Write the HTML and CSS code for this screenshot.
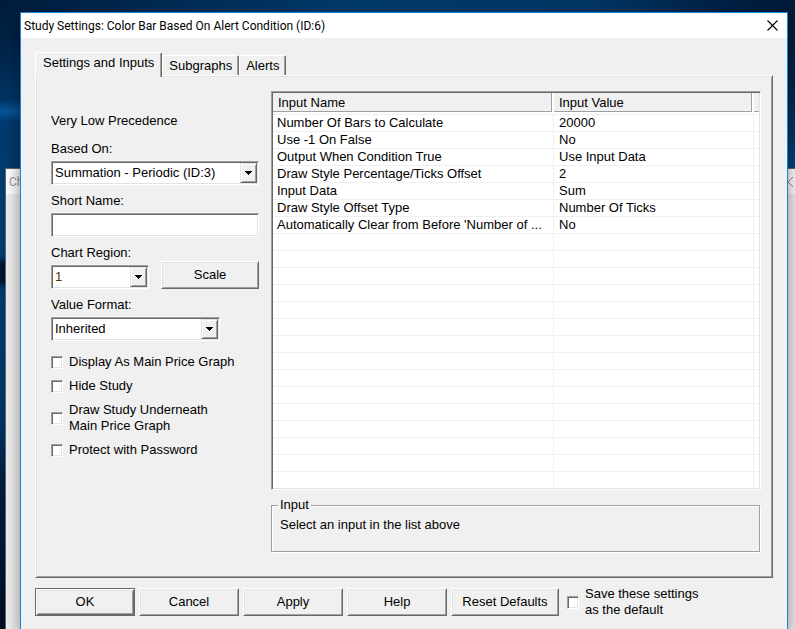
FILE: index.html
```
<!DOCTYPE html>
<html lang="en">
<head>
<meta charset="utf-8">
<title>Study Settings</title>
<link rel="stylesheet" href="styles.css">
</head>
<body>
<div class="parent-window">
  <div class="parent-title"><span>Ch</span>
    <svg class="parent-close" width="10" height="10" viewBox="0 0 10 10"><path d="M0 0L10 10M10 0L0 10" fill="none" stroke="#8c8c8c"/></svg>
  </div>
</div>
<main class="dialog">
  <header class="title-bar">
    <h1>Study Settings: Color Bar Based On Alert Condition (ID:6)</h1>
    <button class="close" type="button" aria-label="Close"><svg width="11" height="11" viewBox="0 0 11 11"><path d="M.5 .5L10.5 10.5M10.5 .5L.5 10.5" fill="none" stroke="#000" stroke-width="1.1"/></svg></button>
  </header>
  <form class="content">
    <div class="tabs" role="tablist">
      <button class="tab active" type="button" role="tab" aria-selected="true">Settings and Inputs</button>
      <button class="tab" type="button" role="tab">Subgraphs</button>
      <button class="tab" type="button" role="tab">Alerts</button>
    </div>
    <div class="panel">
      <div class="options">
        <p class="precedence">Very Low Precedence</p>
        <div class="field">
          <label for="based">Based On:</label>
          <div class="combo"><select id="based"><option>Summation - Periodic (ID:3)</option></select><span class="drop"><svg width="7" height="4" viewBox="0 0 7 4"><path d="M0 0H7V1H6V2H5V3H4V4H3V3H2V2H1V1H0Z"/></svg></span></div>
        </div>
        <div class="field">
          <label for="short">Short Name:</label>
          <input id="short" class="text" type="text">
        </div>
        <div class="region">
          <div class="field region-field">
            <label for="region">Chart Region:</label>
            <div class="combo"><select id="region" class="number"><option>1</option></select><span class="drop"><svg width="7" height="4" viewBox="0 0 7 4"><path d="M0 0H7V1H6V2H5V3H4V4H3V3H2V2H1V1H0Z"/></svg></span></div>
          </div>
          <button class="button scale" type="button">Scale</button>
        </div>
        <div class="field format-field">
          <label for="format">Value Format:</label>
          <div class="combo"><select id="format"><option>Inherited</option></select><span class="drop"><svg width="7" height="4" viewBox="0 0 7 4"><path d="M0 0H7V1H6V2H5V3H4V4H3V3H2V2H1V1H0Z"/></svg></span></div>
        </div>
        <div class="checks">
          <label class="check"><input type="checkbox">Display As Main Price Graph</label>
          <label class="check"><input type="checkbox">Hide Study</label>
          <label class="check"><input type="checkbox"><span>Draw Study Underneath<br>Main Price Graph</span></label>
          <label class="check"><input type="checkbox">Protect with Password</label>
        </div>
      </div>
      <div class="inputs">
        <div class="list">
          <table>
            <colgroup><col class="col-name"><col class="col-value"><col></colgroup>
            <thead><tr><th><span>Input Name</span></th><th><span>Input Value</span></th><th><span class="rest"></span></th></tr></thead>
            <tbody>
              <tr><td>Number Of Bars to Calculate</td><td>20000</td><td></td></tr>
              <tr><td>Use -1 On False</td><td>No</td><td></td></tr>
              <tr><td>Output When Condition True</td><td>Use Input Data</td><td></td></tr>
              <tr><td>Draw Style Percentage/Ticks Offset</td><td>2</td><td></td></tr>
              <tr><td>Input Data</td><td>Sum</td><td></td></tr>
              <tr><td>Draw Style Offset Type</td><td>Number Of Ticks</td><td></td></tr>
              <tr><td>Automatically Clear from Before 'Number of ...</td><td>No</td><td></td></tr>
              <tr><td></td><td></td><td></td></tr>
              <tr><td></td><td></td><td></td></tr>
              <tr><td></td><td></td><td></td></tr>
              <tr><td></td><td></td><td></td></tr>
              <tr><td></td><td></td><td></td></tr>
              <tr><td></td><td></td><td></td></tr>
              <tr><td></td><td></td><td></td></tr>
              <tr><td></td><td></td><td></td></tr>
              <tr><td></td><td></td><td></td></tr>
              <tr><td></td><td></td><td></td></tr>
              <tr><td></td><td></td><td></td></tr>
              <tr><td></td><td></td><td></td></tr>
              <tr><td></td><td></td><td></td></tr>
              <tr><td></td><td></td><td></td></tr>
              <tr><td></td><td></td><td></td></tr>
            </tbody>
          </table>
        </div>
        <fieldset class="group"><legend>Input</legend><p>Select an input in the list above</p></fieldset>
      </div>
    </div>
    <div class="actions">
      <button class="button default" type="button">OK</button>
      <button class="button" type="button">Cancel</button>
      <button class="button" type="button">Apply</button>
      <button class="button" type="button">Help</button>
      <button class="button reset" type="button">Reset Defaults</button>
      <label class="check save"><input type="checkbox"><span>Save these settings<br>as the default</span></label>
    </div>
  </form>
</main>
</body>
</html>
```
FILE: styles.css
```
:root {
  --face: #f0f0f0;
  --light: #e3e3e3;
  --shadow: #a0a0a0;
  --dark: #696969;
}
* { box-sizing: border-box; }
body {
  position: relative;
  display: flex;
  height: 100vh;
  margin: 0;
  padding: 12px 7px 0 20px;
  overflow: hidden;
  font: 13px/16px "Liberation Sans", Arial, sans-serif;
  color: #000;
  background:
    linear-gradient(90deg, #001c3c 0, #002a52 20%, #003a6c 45%, #003563 75%, #001f42 92%, #001a38 100%) top / 100% 12px no-repeat,
    linear-gradient(178deg, #001c3c 0, #002448 45px, #003564 100px, #0a5598 112px, #003a6e 122px, #003b70 255px, #00142e 265px, #00142e 280px, #003a6e 290px, #003460 420px, #001c3e 480px, #000c22 100%) left / 50% 100% no-repeat,
    linear-gradient(180deg, #001a38 0, #002448 80px, #003a70 150px, #004880 168px);
}
h1, p { margin: 0; font: inherit; }
button, input, select { font: inherit; color: inherit; }

.parent-window {
  position: absolute;
  inset: 168px -6px 0 5px;
  border: 1px solid #5b6672;
  border-bottom: 0;
  background: var(--face);
}
.parent-title {
  display: flex;
  align-items: center;
  justify-content: space-between;
  height: 25px;
  padding: 0 7px 0 3px;
  background: #fff;
  font-size: 12px;
  font-family: Roboto, "Open Sans", sans-serif;
  color: #999;
}

.dialog {
  position: relative;
  display: flex;
  flex: 1;
  flex-direction: column;
  min-width: 0;
  border: 1px solid #1883d7;
  border-bottom: 0;
  background: var(--face);
  box-shadow: 0 8px 16px rgba(0, 0, 0, .45);
}
.title-bar {
  display: flex;
  flex: none;
  align-items: center;
  justify-content: space-between;
  height: 25px;
  padding: 0 9px 0 3px;
  background: #fff;
  font-size: 12px;
  font-family: Roboto, "Open Sans", sans-serif;
}
.close { display: flex; padding: 0; border: 0; background: none; }
.content { padding: 14px 14px 0; }

.tabs { display: flex; align-items: flex-end; }
.tab {
  height: 20px;
  padding: 0 6px;
  border: 1px solid;
  border-color: #fff var(--dark) #fff #fff;
  border-bottom: 0;
  border-radius: 2px 2px 0 0;
  background: var(--face);
  box-shadow: inset -1px 0 var(--shadow);
  line-height: 18px;
}
.tab.active {
  position: relative;
  height: 25px;
  margin-bottom: -2px;
  padding: 0 7px 4px;
}
.panel {
  display: flex;
  gap: 12px;
  padding: 15px 11px 24px 15px;
  border: 1px solid;
  border-color: #fff var(--dark) var(--dark) #fff;
  box-shadow: inset 1px 1px var(--light), inset -1px -1px var(--shadow);
}

.options {
  display: flex;
  flex: none;
  flex-direction: column;
  gap: 8px;
  width: 208px;
  padding-top: 22px;
}
.precedence { margin-bottom: 4px; }
.field { display: flex; flex-direction: column; gap: 4px; }
.region { display: flex; align-items: flex-end; justify-content: space-between; }
.region-field { width: 98px; }
.format-field { width: 169px; }
.combo, .text {
  width: 100%;
  height: 24px;
  border: 1px solid;
  border-color: var(--shadow) #fff #fff var(--shadow);
  border-radius: 0;
  background: #fff;
  box-shadow: inset 1px 1px var(--dark), inset -1px -1px var(--light);
}
.text { outline: 0; }
.combo { display: grid; padding: 1px; }
.combo select {
  grid-area: 1 / 1;
  min-width: 0;
  padding: 0 18px 0 2px;
  border: 0;
  background: transparent;
  appearance: none;
}
.combo .number { color: #5a2c00; }
.drop {
  display: flex;
  grid-area: 1 / 1;
  align-items: center;
  justify-content: center;
  justify-self: end;
  width: 17px;
  border: 1px solid;
  border-color: var(--light) var(--dark) var(--dark) var(--light);
  background: var(--face);
  box-shadow: inset 1px 1px #fff, inset -1px -1px var(--shadow);
  pointer-events: none;
}
.button {
  width: 100px;
  height: 28px;
  padding: 0;
  border: 1px solid;
  border-color: #fff var(--dark) var(--dark) #fff;
  background: var(--face);
  box-shadow: inset 1px 1px var(--light), inset -1px -1px var(--shadow);
}
.scale { width: 98px; }
.reset { width: 108px; }
.default {
  border-color: var(--dark);
  box-shadow: inset 1px 1px #fff, inset -1px -1px var(--dark), inset 2px 2px var(--light), inset -2px -2px var(--shadow);
}
.checks { display: flex; flex-direction: column; gap: 8px; margin-top: 5px; }
.check { display: flex; align-items: center; gap: 6px; }
.check input {
  flex: none;
  width: 12px;
  height: 13px;
  margin: 0;
  border: 1px solid;
  border-color: var(--shadow) #fff #fff var(--shadow);
  background: #fff;
  box-shadow: inset 1px 1px var(--dark), inset -1px -1px var(--light);
  appearance: none;
}

.inputs { display: flex; flex: 1; flex-direction: column; gap: 7px; min-width: 0; }
.list {
  padding: 1px;
  border: 1px solid;
  border-color: var(--shadow) #fff #fff var(--shadow);
  background: #fff;
  box-shadow: inset 1px 1px var(--dark), inset -1px -1px var(--light);
}
table { width: 100%; border-spacing: 0; table-layout: fixed; }
.col-name { width: 281px; }
.col-value { width: 200px; }
th, td { padding: 0; border-bottom: 1px solid var(--face); text-align: left; font-weight: 400; white-space: nowrap; }
th { height: 22px; vertical-align: top; }
th span {
  display: block;
  height: 19px;
  margin-right: 2px;
  padding: 2px 5px 0;
  border: solid var(--shadow);
  border-width: 0 1px 1px 0;
  background: var(--face);
}
th .rest { margin: 0; padding: 0; border-right: 0; }
td { height: 17px; padding-left: 4px; border-right: 1px solid var(--face); }
td + td { padding-left: 5px; }
td:last-child { padding: 0; border-right: 0; }
tr:last-child td { height: 16px; border-bottom: 0; }

.group {
  min-width: 0;
  height: 55px;
  margin: 0 1px 1px 0;
  padding: 4px 8px 0;
  border: 1px solid var(--shadow);
  box-shadow: 1px 1px #fff, inset 1px 1px #fff;
}
.group legend { margin-left: -2px; padding: 0 2px; background: var(--face); }

.actions { display: flex; align-items: center; gap: 4px; margin-top: 8px; }
.save { gap: 6px; padding-left: 4px; }
```
